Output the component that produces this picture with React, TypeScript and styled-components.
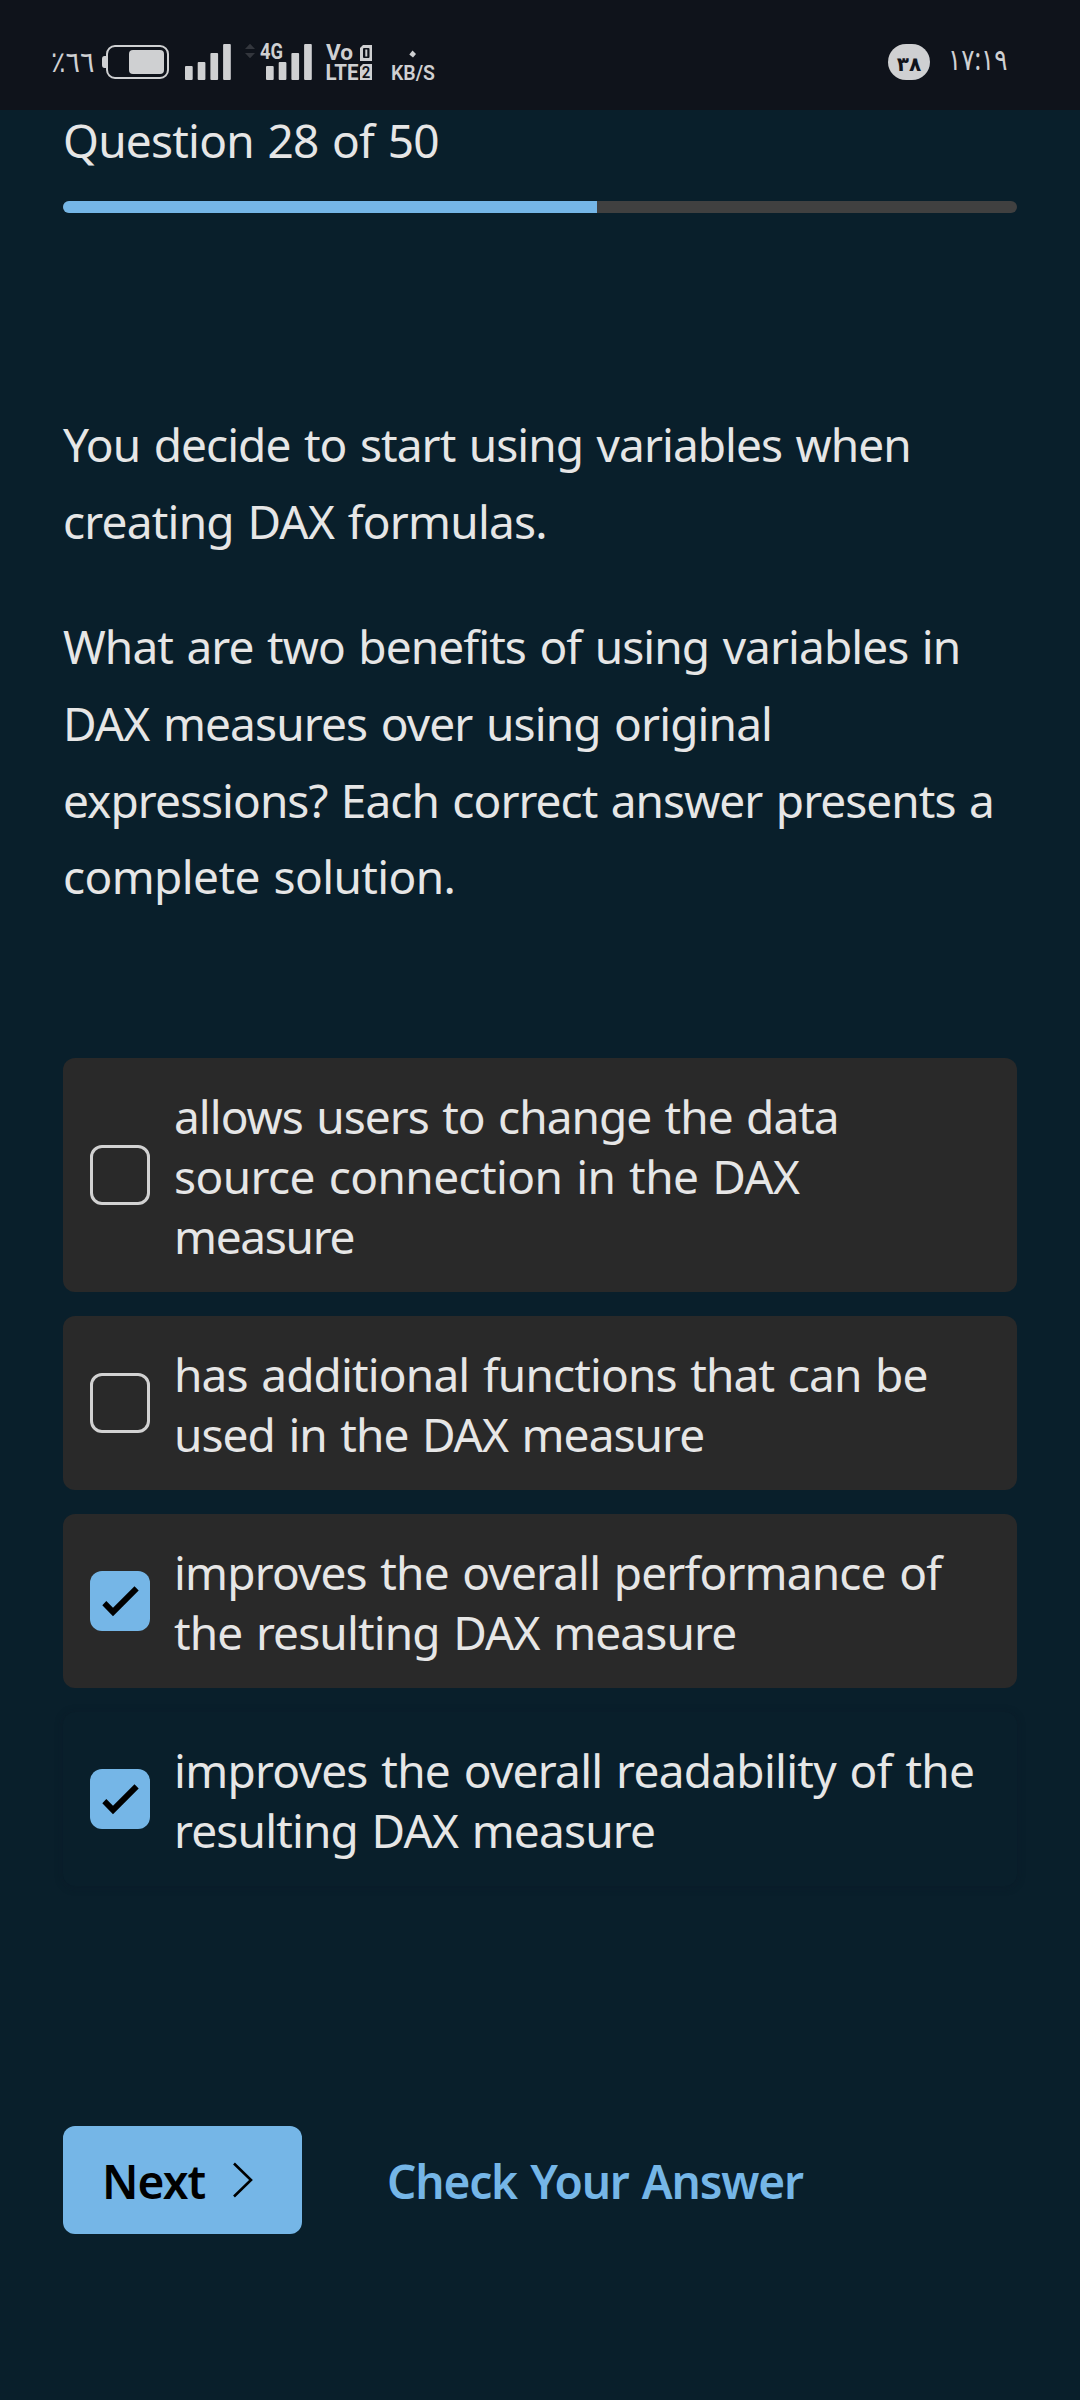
import React, { useState } from "react";
import styled, { createGlobalStyle } from "styled-components";

const color = {
  page: "#091f2b",
  bar: "#0f131b",
  status: "#cfd0d2",
  text: "#e6e6e6",
  card: "#292929",
  track: "#404040",
  accent: "#75b6e7",
};

const GlobalStyle = createGlobalStyle`
  * { box-sizing: border-box; }
  body {
    margin: 0;
    background: ${color.page};
    color: ${color.text};
    font-family: "Noto Sans", "Open Sans", "DejaVu Sans", sans-serif;
  }
  svg { overflow: visible; }
`;

const Screen = styled.div`
  display: flex;
  flex-direction: column;
  width: 1080px;
  height: 2400px;
  overflow: hidden;
  background: ${color.page};
`;

const StatusBar = styled.header`
  display: flex;
  justify-content: space-between;
  align-items: flex-start;
  height: 110px;
  flex: none;
  padding: 43px 73px 0 51px;
  background: ${color.bar};
  color: ${color.status};
`;

const StatusGroup = styled.div<{ $gap: number }>`
  display: flex;
  align-items: center;
  gap: ${(p) => p.$gap}px;
  height: 38px;
`;

const StatusText = styled.span<{ $size: number; $width: number; $lift: number; $narrow: number }>`
  width: ${(p) => p.$width}px;
  font-size: ${(p) => p.$size}px;
  transform: scaleX(${(p) => p.$narrow});
  transform-origin: left center;
  line-height: 38px;
  padding-bottom: ${(p) => p.$lift}px;
  white-space: nowrap;
`;

const NotificationCount = styled.span`
  display: flex;
  align-items: center;
  justify-content: center;
  width: 42px;
  height: 36px;
  padding-top: 4px;
  border-radius: 18px;
  background: ${color.status};
  color: ${color.bar};
  font-size: 20px;
  font-weight: 600;
  line-height: 1;
`;

const Content = styled.main`
  display: flex;
  flex-direction: column;
  padding: 0 63px;
`;

const Line = styled.span<{ $tracking: number }>`
  display: block;
  white-space: nowrap;
  word-spacing: 2.4px;
  letter-spacing: ${(p) => p.$tracking}px;
`;

const Counter = styled.div`
  font-size: 46px;
  line-height: 60px;
`;

const ProgressTrack = styled.div`
  height: 12px;
  margin-top: 31px;
  border-radius: 6px;
  background: ${color.track};
  overflow: hidden;
`;

const ProgressFill = styled.div`
  height: 100%;
  background: ${color.accent};
`;

const Prompt = styled.section`
  display: flex;
  flex-direction: column;
  gap: 48px;
  margin-top: 193.4px;
  font-size: 46px;
  line-height: 76.8px;
`;

const Paragraph = styled.p`
  margin: 0;
`;

const OptionList = styled.div`
  display: flex;
  flex-direction: column;
  gap: 24px;
  margin-top: 142.8px;
`;

const OptionCard = styled.div<{ $active: boolean }>`
  display: flex;
  align-items: center;
  gap: 24px;
  padding: 27px;
  border-radius: 12px;
  cursor: pointer;
  background: ${(p) => (p.$active ? color.page : color.card)};
  box-shadow: ${(p) => (p.$active ? "0 1px 9px rgba(14, 20, 38, 0.3)" : "none")};
`;

const Checkbox = styled.span<{ $checked: boolean }>`
  display: flex;
  flex: none;
  width: 60px;
  height: 60px;
  border-radius: 12px;
  border: ${(p) => (p.$checked ? "none" : "3px solid #d2d2d2")};
  background: ${(p) => (p.$checked ? color.accent : "transparent")};
`;

const OptionText = styled.div`
  padding-top: 1px;
  margin-bottom: -1px;
  font-size: 46px;
  line-height: 60px;
`;

const Actions = styled.footer`
  display: flex;
  align-items: center;
  gap: 85px;
  margin-top: 240px;
`;

const Button = styled.button<{ $primary?: boolean }>`
  display: flex;
  align-items: center;
  height: 108px;
  padding: 2px 0 0 ${(p) => (p.$primary ? 39 : 0)}px;
  width: ${(p) => (p.$primary ? "239px" : "auto")};
  gap: 27px;
  border: 0;
  border-radius: 12px;
  background: ${(p) => (p.$primary ? color.accent : "transparent")};
  color: ${(p) => (p.$primary ? "#000" : color.accent)};
  font: 560 46px/60px "Noto Sans", sans-serif;
`;

const Battery = () => (
  <svg width="67" height="34" viewBox="0 0 67 34">
    <path d="M4 11H2.5Q0 11 0 14v6q0 3 2.5 3H4z" fill={color.status} />
    <rect x="5" y="1" width="61" height="32" rx="8" fill="none" stroke={color.status} strokeWidth="2" />
    <rect x="27" y="5" width="35" height="24" rx="4" fill={color.status} />
  </svg>
);

const Bars = ({ x }: { x: number }) => (
  <g fill={color.status}>
    {[14, 18, 27, 36].map((h, i) => (
      <rect key={h} x={x + i * 12.7} y={37 - h} width="7.7" height={h} rx="1" />
    ))}
  </g>
);

const Signal = () => (
  <svg width="46" height="38" viewBox="0 0 46 38">
    <Bars x={0} />
  </svg>
);

const Signal4G = () => (
  <svg width="67" height="38" viewBox="0 0 67 38" fontFamily="Roboto, sans-serif" fontWeight="700">
    <path d="M0 6 5 .8 10 6zM0 10h10L5 15.2z" fill="#33363d" />
    <text x="15" y="16" fontSize="21.5" textLength="23" lengthAdjust="spacingAndGlyphs" fill={color.status}>4G</text>
    <Bars x={21} />
  </svg>
);

const VoLte = () => (
  <svg width="46" height="38" viewBox="0 0 46 38" fontFamily="Roboto, sans-serif" fontWeight="700" fill={color.status}>
    <text x="0" y="17" fontSize="21.5" textLength="27" lengthAdjust="spacingAndGlyphs">Vo</text>
    <text x="-0.5" y="37" fontSize="21.5" textLength="33" lengthAdjust="spacingAndGlyphs">LTE</text>
    <path d="M37 2h9v16H34V5z" />
    <rect x="37" y="5" width="6.500" height="10" rx="1" fill={color.bar} />
    <rect x="39.300" y="6.500" width="2" height="7" />
    <path d="M37 21h9v16H34V24z" />
    <text x="35.700" y="35" fontSize="16" textLength="8.500" lengthAdjust="spacingAndGlyphs" fontWeight="600" fill={color.bar}>2</text>
  </svg>
);

const NetworkSpeed = () => (
  <svg width="44" height="38" viewBox="0 0 44 38" fontFamily="Roboto, sans-serif" fontWeight="600" fill={color.status}>
    <path d="m20.500 7.500 3.500 3.500-3 3.500-3.700-3z" />
    <text x="-1" y="36.500" fontSize="19.500" textLength="44" lengthAdjust="spacingAndGlyphs">KB/S</text>
  </svg>
);

const Check = () => (
  <svg width="60" height="60" viewBox="0 0 60 60">
    <path d="M12.300 34.300 16.300 30 23 36.800 44.500 15.300 48.700 19.500 23 45.300z" fill="#000" />
  </svg>
);

const Chevron = () => (
  <svg width="22" height="36" viewBox="0 0 22 36">
    <path d="M2 0.500 19 17 2 33.500" fill="none" stroke="#000" strokeWidth="2.600" />
  </svg>
);

type TextLine = [string, number];

const prompt: TextLine[][] = [
  [
    ["You decide to start using variables when", -0.93],
    ["creating DAX formulas.", -0.78],
  ],
  [
    ["What are two benefits of using variables in", -0.91],
    ["DAX measures over using original", -0.87],
    ["expressions? Each correct answer presents a", -0.95],
    ["complete solution.", -0.6],
  ],
];

const options: { lines: TextLine[]; checked: boolean }[] = [
  {
    checked: false,
    lines: [
      ["allows users to change the data", -0.97],
      ["source connection in the DAX", -0.58],
      ["measure", -1.3],
    ],
  },
  {
    checked: false,
    lines: [
      ["has additional functions that can be", -0.85],
      ["used in the DAX measure", -0.93],
    ],
  },
  {
    checked: true,
    lines: [
      ["improves the overall performance of", -0.84],
      ["the resulting DAX measure", -0.86],
    ],
  },
  {
    checked: true,
    lines: [
      ["improves the overall readability of the", -0.73],
      ["resulting DAX measure", -0.83],
    ],
  },
];

const Lines = ({ lines }: { lines: TextLine[] }) => (
  <>
    {lines.map(([text, tracking]) => (
      <Line key={text} $tracking={tracking}>{text}</Line>
    ))}
  </>
);

export default function App() {
  const [checked, setChecked] = useState(options.map((o) => o.checked));
  const [active, setActive] = useState(3);
  const current = 28;
  const total = 50;

  const toggle = (index: number) => {
    setActive(index);
    setChecked((prev) => prev.map((value, i) => (i === index ? !value : value)));
  };

  return (
    <Screen>
      <GlobalStyle />
      <StatusBar>
        <StatusGroup $gap={20}>
          <StatusGroup $gap={16}>
            <StatusGroup $gap={7}>
              <StatusText $size={29} $width={44} $lift={2} $narrow={0.93}>٪٦٦</StatusText>
              <Battery />
            </StatusGroup>
            <StatusGroup $gap={14}>
              <Signal />
              <Signal4G />
              <VoLte />
            </StatusGroup>
          </StatusGroup>
          <NetworkSpeed />
        </StatusGroup>
        <StatusGroup $gap={18}>
          <NotificationCount>٣٨</NotificationCount>
          <StatusText $size={30} $width={59} $lift={6} $narrow={0.82}>١٧:١٩</StatusText>
        </StatusGroup>
      </StatusBar>
      <Content>
        <Counter>
          <Line $tracking={-0.78}>{`Question ${current} of ${total}`}</Line>
        </Counter>
        <ProgressTrack>
          <ProgressFill style={{ width: `${(current / total) * 100}%` }} />
        </ProgressTrack>
        <Prompt>
          {prompt.map((lines) => (
            <Paragraph key={lines[0][0]}>
              <Lines lines={lines} />
            </Paragraph>
          ))}
        </Prompt>
        <OptionList>
          {options.map((option, i) => (
            <OptionCard key={i} $active={i === active} onClick={() => toggle(i)}>
              <Checkbox $checked={checked[i]}>{checked[i] && <Check />}</Checkbox>
              <OptionText>
                <Lines lines={option.lines} />
              </OptionText>
            </OptionCard>
          ))}
        </OptionList>
        <Actions>
          <Button $primary>
            <Line $tracking={-0.9}>Next</Line>
            <Chevron />
          </Button>
          <Button>
            <Line $tracking={-1.16}>Check Your Answer</Line>
          </Button>
        </Actions>
      </Content>
    </Screen>
  );
}
